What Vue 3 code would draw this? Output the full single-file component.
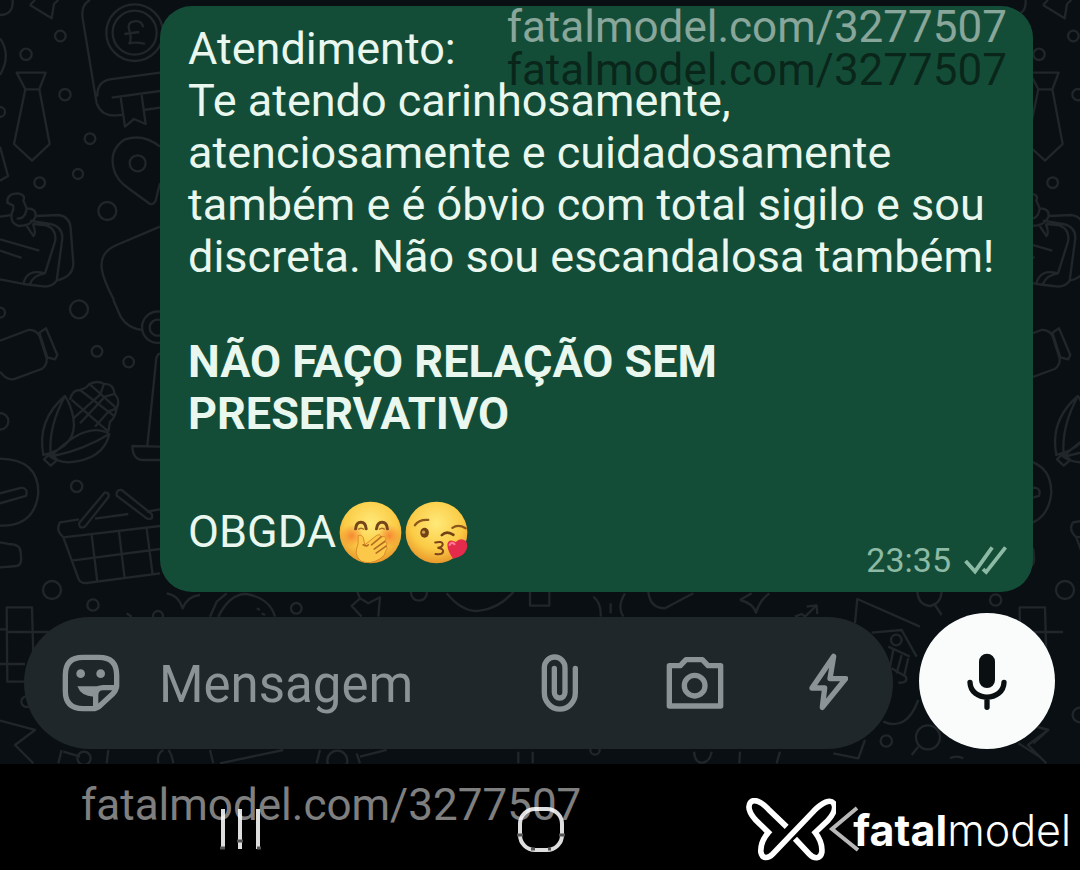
<template>
  <div class="screen">
    <main class="chat">
      <svg class="doodles" viewBox="0 0 1080 764" preserveAspectRatio="xMinYMin slice" aria-hidden="true">
        <defs>
          <g id="tile">
            <!-- tie, book, map pin, notes -->
            <g transform="scale(.3333)">
              <path d="M0 45Q40 45 38 0M90 15L155 55L162 12L175 0M90 15L105 0M0 115Q35 165 0 225M0 440L24 528L0 542" />
              <path d="M50 218H137L118 268H76ZM76 268L42 432L96 482L149 432L118 268" />
              <path d="M270 0Q242 15 248 55L290 310Q305 350 350 346L372 344M480 218L330 238Q290 245 292 290M335 293L480 273M432 330L480 323" />
              <path d="M362 292L375 380L402 357L437 372L425 285" />
              <circle cx="404" cy="98" r="85" /><circle cx="404" cy="98" r="66" />
              <path d="M430 82Q425 60 402 64Q380 68 388 92Q396 118 388 130Q410 125 435 132M373 102L418 96" />
              <path d="M480 440Q430 400 375 418Q325 450 342 510Q350 540 385 565L450 612Q466 616 470 590L480 550" />
              <circle cx="413" cy="490" r="24" />
              <path d="M480 680L350 735Q300 755 305 805Q310 840 342 900" />
              <path d="M0 650L35 645M110 648L175 645Q210 650 212 685L220 790Q220 830 170 842M90 662L150 672Q188 680 187 715L170 842Q155 865 120 858L70 852L0 838M100 672L140 676Q172 690 165 725L135 820M70 852Q80 805 135 820Q100 825 90 852M0 718L118 752M0 752L65 774" />
              <path d="M22 608Q20 580 55 580Q78 585 70 602L80 625Q110 625 107 650Q95 678 55 678Q30 670 35 640Q42 628 40 617ZM80 678L100 708Q110 700 98 670M50 655Q75 660 80 625" />
              <circle cx="181" cy="108" r="16" /><circle cx="78" cy="163" r="17" /><circle cx="195" cy="284" r="17" />
              <circle cx="270" cy="416" r="16" /><circle cx="234" cy="522" r="15" /><circle cx="119" cy="548" r="16" />
              <circle cx="322" cy="633" r="27" /><circle cx="0" cy="336" r="15" />
            </g>
            <!-- jar, corn, basket -->
            <g transform="translate(0 300) scale(.3333)">
              <path d="M0 122L85 90Q110 88 120 112L140 175Q142 195 125 207L40 238Q18 240 0 215M118 98L138 85L172 165L165 178L142 172Z" />
              <path d="M195 288Q110 360 130 465Q235 440 220 355Q215 320 195 288ZM195 288Q145 380 152 462M152 470Q260 360 328 402Q310 480 205 487Q165 485 145 465M160 468Q250 450 328 402M150 460L132 478L152 497L172 480Z" />
              <path d="M210 300Q215 270 240 270Q260 265 268 252Q295 240 312 252Q340 250 344 282Q362 300 350 325Q345 355 330 365L325 395M215 300L325 395M240 270L345 350M268 252L350 325M312 252L300 285L220 355M344 282L315 290L240 370M350 325L325 335L285 380" />
              <path d="M0 476Q115 478 115 578Q105 680 0 677M0 580L65 563Q85 565 78 588L0 610M0 727L25 732Q64 732 62 760Q68 795 50 798L0 802" />
              <path d="M480 678L190 712Q165 690 180 667L237 658M285 656L385 642M440 635L480 628M190 712L235 835Q240 850 260 849L480 820M275 705L292 845M357 695L374 835M440 685L458 824M215 782L480 747" />
              <path d="M315 577L238 668Q235 688 255 680L325 592Q330 578 315 577ZM365 570L455 642Q462 662 440 655L350 587Q348 568 365 570Z" />
              <path d="M340 0L362 50Q385 88 430 90M480 35A47 47 0 1 0 480 128M480 60A24 24 0 1 0 480 106M480 160Q468 165 468 185L442 438M480 440L397 438Q398 480 430 480H480" />
              <circle cx="237" cy="28" r="27" /><circle cx="291" cy="154" r="16" /><circle cx="386" cy="186" r="16" />
              <circle cx="0" cy="364" r="25" /><circle cx="230" cy="559" r="17" /><circle cx="156" cy="870" r="27" />
              <circle cx="279" cy="915" r="17" /><circle cx="0" cy="38" r="15" />
            </g>
            <!-- building blocks and star at the bottom edge -->
            <g transform="translate(0 590) scale(.3333)">
              <path d="M20 52H96L102 275H22ZM0 118H22M0 222H75M22 126H150M0 392L105 420L45 465L100 520" />
            </g>
          </g>
        </defs>
        <use href="#tile" />
        <use href="#tile" x="1013" />
        <!-- strip around the text field -->
        <g transform="translate(0 590) scale(.3333)">
          <path d="M500 10Q535 15 548 55Q560 20 600 15M630 80L650 35L680 10M655 80Q690 10 740 12Q810 25 825 80M1070 0L1080 25L1055 48L1085 80M1135 80L1140 22L1105 40L1080 25M380 70L395 80" />
          <path d="M185 480L175 520M190 485L240 500M325 480L320 520M475 520Q470 490 490 480M520 520Q515 490 505 480M630 480L640 520M660 520L850 480M950 520L960 480M1070 490L1080 520M1080 500L1160 480" />
          <circle cx="252" cy="505" r="20" /><circle cx="1012" cy="512" r="30" /><circle cx="889" cy="55" r="16" />
          <circle cx="474" cy="78" r="15" /><circle cx="80" cy="335" r="16" /><circle cx="1257" cy="8" r="24" /><path d="M770 55L780 60M785 70L795 75" />
        </g>
        <g transform="translate(500 590) scale(.3333)">
          <path d="M-160 10Q-110 70 -60 62Q0 55 45 0M90 0V47H148V0M280 20Q305 40 302 80M375 10Q350 50 370 80M332 40V70M445 5Q450 55 495 55L580 10M720 30L755 10M720 30Q760 40 768 68Q780 30 808 10M885 80L905 72L915 80L948 48M920 50L950 46L952 72" />
          <path d="M1065 100L1072 27L1260 110M1115 128L1205 120L1250 200M1165 170L1230 200M1180 180L1170 230M1205 195L1190 250M1225 205L1212 260M1175 235L1218 260Q1225 280 1195 278M1150 395Q1220 425 1255 330M1000 490L1075 505L1095 450M1235 495L1255 470" />
          <path d="M55 485V520M98 485V520M582 485Q585 520 608 518Q630 515 635 485M720 485L718 520M840 485L830 520" />
          <circle cx="1189" cy="150" r="16" /><circle cx="1159" cy="453" r="17" /><circle cx="285" cy="480" r="14" />
          <circle cx="1284" cy="442" r="36" />
        </g>
        <g transform="translate(840 520) scale(.3333)">
          <path d="M232 215Q235 255 270 258Q302 252 305 215M285 255L305 285M590 620L625 630L580 670M535 670L600 710M330 715Q350 705 370 715" />
          <circle cx="467" cy="240" r="17" /><circle cx="720" cy="585" r="22" />
        </g>
      </svg>

      <article class="bubble">
        <p>
          Atendimento:<br />
          Te atendo carinhosamente,<br />
          atenciosamente e cuidadosamente<br />
          também e é óbvio com total sigilo e sou<br />
          discreta. Não sou escandalosa também!
        </p>
        <p class="strong">NÃO FAÇO RELAÇÃO SEM<br />PRESERVATIVO</p>
        <div class="last-row">
          <div class="thanks">
            <span>OBGDA</span>
            <svg class="emoji" viewBox="0 0 190 190" role="img" aria-label="Rindo com a mão na boca">
              <defs>
                <radialGradient id="face" cx=".5" cy=".35" r=".65">
                  <stop offset="0" stop-color="#ffe979" />
                  <stop offset=".65" stop-color="#fbcb45" />
                  <stop offset="1" stop-color="#e9982c" />
                </radialGradient>
                <radialGradient id="blush">
                  <stop offset="0" stop-color="#f4772b" stop-opacity=".8" />
                  <stop offset="1" stop-color="#f4772b" stop-opacity="0" />
                </radialGradient>
              </defs>
              <circle cx="95" cy="95" r="93" fill="url(#face)" />
              <circle cx="38" cy="105" r="34" fill="url(#blush)" />
              <circle cx="152" cy="105" r="34" fill="url(#blush)" />
              <path d="M50 84Q52 64 66 64Q80 64 82 84M113 84Q116 64 130 64Q144 64 146 84" fill="none" stroke="#75461b" stroke-width="9" stroke-linecap="round" />
              <path d="M58 86Q66 78 76 86M121 86Q130 78 138 86" fill="none" stroke="#a96b24" stroke-width="4" />
              <path d="M58 104Q67 99 73 110L78 132L112 105Q123 97 127 108L136 107Q145 111 138 122Q149 124 142 136Q150 142 141 151Q140 165 123 175Q95 192 68 182Q50 170 52 148Q60 130 58 104Z" fill="#fbc84a" stroke="#dc8b28" stroke-width="3" />
              <path d="M127 108L98 132M138 122L106 145M142 136L112 157M73 132Q85 139 88 132" fill="none" stroke="#b66d22" stroke-width="5" stroke-linecap="round" />
            </svg>
            <svg class="emoji" viewBox="0 0 190 190" role="img" aria-label="Mandando um beijo">
              <circle cx="95" cy="95" r="93" fill="url(#face)" />
              <path d="M30 73Q42 55 70 57M143 81Q160 69 183 82" fill="none" stroke="#8c571d" stroke-width="7" stroke-linecap="round" />
              <ellipse cx="59" cy="96" rx="13" ry="15" fill="#704216" />
              <circle cx="56" cy="94" r="5" fill="#d0a24e" />
              <path d="M111 103Q126 88 146 102" fill="none" stroke="#704216" stroke-width="8" stroke-linecap="round" />
              <path d="M91 125Q112 120 114 130Q113 140 98 141Q116 143 115 153Q112 163 92 160" fill="none" stroke="#7c431d" stroke-width="6" stroke-linecap="round" />
              <path d="M145 174Q126 147 128 129Q134 112 153 124Q167 109 184 121Q195 143 174 162Q162 171 145 174Z" fill="#e52b4c" />
              <path d="M135 132Q140 122 149 130" fill="none" stroke="#ff7993" stroke-width="7" stroke-linecap="round" />
            </svg>
          </div>
          <div class="meta">
            <time>23:35</time>
            <svg class="checks" viewBox="0 0 145 100" aria-hidden="true">
              <path d="M8 53L38 86L92 10M63 79L73 88L134 10" />
            </svg>
          </div>
        </div>
      </article>

      <form class="composer" @submit.prevent>
        <div class="field">
          <button type="button" aria-label="Figurinhas">
            <svg class="icon wide" viewBox="0 0 180 180">
              <path d="M66 13H114Q167 13 167 66V100Q165 113 154 124L119 156Q108 167 94 167H66Q13 167 13 114V66Q13 13 66 13Z" />
              <path d="M104 160V126Q104 104 126 104H164" />
              <path class="solid" d="M49 100H118L98 131Q60 130 49 100Z" />
              <circle class="solid" cx="59" cy="62" r="13" />
              <circle class="solid" cx="119" cy="62" r="13" />
            </svg>
          </button>
          <input v-model="message" type="text" placeholder="Mensagem" aria-label="Mensagem" />
          <div class="actions">
            <button type="button" aria-label="Anexar">
              <svg class="icon narrow" viewBox="0 0 120 180">
                <path d="M106 46V119A46 49 0 0 1 13 119V44A31 32 0 0 1 75 44V118A16 17 0 0 1 43 118V46" />
              </svg>
            </button>
            <button type="button" aria-label="Câmera">
              <svg class="icon wide" viewBox="0 0 180 180">
                <path d="M16 38H49L66 20H115L132 38H170V159H16Z" />
                <circle cx="92" cy="98" r="31" />
              </svg>
            </button>
            <button type="button" aria-label="Respostas rápidas">
              <svg class="icon narrow" viewBox="0 0 120 180">
                <path d="M77 10L66 77H113L43 163L50 105H12Z" />
              </svg>
            </button>
          </div>
        </div>
        <button type="button" class="mic" aria-label="Gravar áudio">
          <svg viewBox="0 0 126 174">
            <rect x="39" y="5" width="48" height="103" rx="24" />
            <path d="M12 91C14 150 112 150 114 91M63 136V166" />
          </svg>
        </button>
      </form>
    </main>

    <nav class="system-bar" aria-label="Sistema">
      <button type="button" aria-label="Recentes">
        <svg viewBox="0 0 60 46">
          <path d="M15 3V43M32 3V43M50 3V43" />
          <path class="worn" d="M12 42H17M29 35H35M49 42H53" />
        </svg>
      </button>
      <button type="button" aria-label="Início">
        <svg viewBox="0 0 60 46">
          <rect x="10" y="3" width="42" height="41" rx="15" />
          <path class="worn" d="M7 29H13M49 29H55M21 43H25M38 43H41" />
        </svg>
      </button>
      <button type="button" aria-label="Voltar">
        <svg viewBox="0 0 60 46"><path class="back" d="M45 2L20 23L46 44" /></svg>
      </button>
    </nav>

    <div class="watermark top">
      <span>{{ profile }}</span>
      <span class="dark">{{ profile }}</span>
    </div>
    <span class="watermark bottom">{{ profile }}</span>
    <div class="brand">
      <svg viewBox="0 0 270 190" aria-hidden="true">
        <path d="M122 87L66 33C45 10 23 2 13 13C2 27 12 47 27 65L67 104C51 122 43 145 44 163C48 184 65 184 80 169L205 38C230 13 253 3 263 15C272 30 262 50 247 67L208 104C222 122 230 143 228 164C224 184 205 185 190 169L147 123" />
      </svg>
      <span class="wordmark"><b>fatal</b>model</span>
    </div>
  </div>
</template>

<script setup>
import { ref } from 'vue';

const message = ref('');
const profile = 'fatalmodel.com/3277507';
</script>

<style>
body {
  margin: 0;
  background: #000;
}
</style>

<style scoped>
.screen {
  position: relative;
  display: flex;
  flex-direction: column;
  min-height: 100vh;
  overflow: hidden;
  background: #000;
  font-family: Roboto, "Liberation Sans", sans-serif;
}

.chat {
  position: relative;
  flex: 1;
  padding: 6px 0 15px;
  background: #0a0f13;
}

.doodles {
  position: absolute;
  inset: 0;
  width: 100%;
  height: 100%;
  fill: none;
  stroke: #20262a;
  stroke-width: 7;
  stroke-linejoin: round;
}

.bubble {
  position: relative;
  display: flex;
  flex-direction: column;
  gap: 53px;
  margin: 0 47px 0 160px;
  padding: 17px 24px 15px 28px;
  border-radius: 32px;
  background: #144d37;
  color: #e9f7ef;
  font-size: 45px;
  line-height: 52px;
}

.bubble p {
  margin: 0;
}

.bubble .strong {
  font-weight: 700;
}

.last-row {
  display: flex;
  justify-content: space-between;
  min-height: 84px;
}

.thanks {
  display: flex;
  align-items: center;
  gap: 3px;
  height: 78px;
}

.emoji {
  width: 63px;
  height: 63px;
}

.meta {
  display: flex;
  align-items: center;
  align-self: flex-end;
  gap: 12px;
  color: #8dbaa4;
  font-size: 34px;
  line-height: 34px;
}

.checks {
  width: 46px;
  height: 32px;
  fill: none;
  stroke: currentColor;
  stroke-width: 12;
}

button {
  display: flex;
  padding: 0;
  border: 0;
  background: none;
  color: inherit;
  cursor: pointer;
}

.composer {
  position: relative;
  display: flex;
  align-items: flex-end;
  gap: 26px;
  margin: 21px 25px 0 24px;
}

.field {
  display: flex;
  flex: 1;
  align-items: center;
  gap: 38px;
  min-width: 0;
  height: 132px;
  padding: 0 45px 0 37px;
  border-radius: 66px;
  background: #20272a;
  color: #8b9396;
}

.field input {
  flex: 1;
  min-width: 0;
  padding: 4px 0 0;
  border: 0;
  outline: 0;
  background: none;
  color: #e9edef;
  font: 51px/62px Roboto, "Liberation Sans", sans-serif;
}

.field input::placeholder {
  color: #8b9396;
  opacity: 1;
}

.actions {
  display: flex;
  align-items: center;
  gap: 84px;
}

.icon {
  height: 60px;
  fill: none;
  stroke: currentColor;
  stroke-width: 16;
  stroke-linecap: round;
  stroke-linejoin: round;
}

.icon.wide {
  width: 60px;
}

.icon.narrow {
  width: 40px;
}

.icon .solid {
  fill: currentColor;
  stroke: none;
}

.mic {
  align-items: center;
  justify-content: center;
  width: 136px;
  height: 136px;
  border-radius: 50%;
  background: #fafcfc;
  color: #0a0f12;
}

.mic svg {
  width: 42px;
  height: 58px;
  fill: none;
  stroke: currentColor;
  stroke-width: 16;
  stroke-linecap: round;
}

.mic rect {
  fill: currentColor;
  stroke: none;
}

.system-bar {
  display: flex;
  justify-content: center;
  gap: 242px;
  height: 64px;
  padding-top: 42px;
  background: #000;
}

.system-bar button {
  width: 60px;
  height: 46px;
}

.system-bar svg {
  width: 60px;
  height: 46px;
  fill: none;
  stroke: #dedede;
  stroke-width: 4;
}

.system-bar .worn {
  stroke: #555;
  stroke-width: 3;
}

.system-bar .back {
  stroke: #b8b8b8;
}

.watermark {
  position: absolute;
  color: rgba(255, 255, 255, 0.5);
  font-size: 44px;
  line-height: 43px;
  pointer-events: none;
}

.watermark.top {
  top: 6px;
  right: 73px;
  display: flex;
  flex-direction: column;
}

.watermark .dark {
  color: rgba(0, 0, 0, 0.5);
}

.watermark.bottom {
  bottom: 43px;
  left: 81px;
}

.brand {
  position: absolute;
  right: 9px;
  bottom: 9px;
  display: flex;
  align-items: center;
  gap: 17px;
  color: #fff;
  pointer-events: none;
}

.brand svg {
  width: 90px;
  height: 63px;
  fill: none;
  stroke: currentColor;
  stroke-width: 17;
}

.wordmark {
  font-family: Inter, sans-serif;
  font-size: 43px;
  font-weight: 300;
  line-height: 40px;
}

.wordmark b {
  font-weight: 700;
}
</style>
